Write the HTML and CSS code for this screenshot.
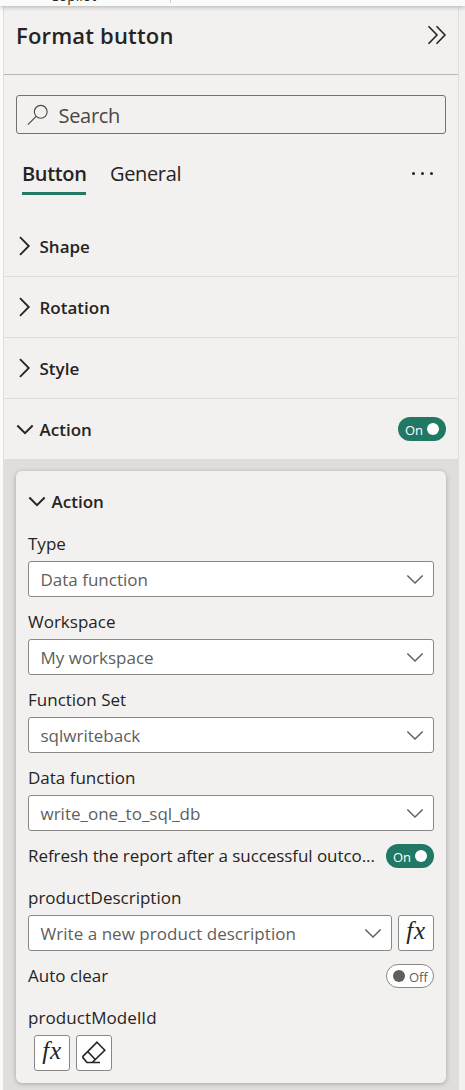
FILE: index.html
```html
<!DOCTYPE html>
<html lang="en">
<head>
<meta charset="utf-8">
<title>Format button</title>
<link rel="stylesheet" href="styles.css">
</head>
<body>
<svg class="defs" width="0" height="0" aria-hidden="true">
  <symbol id="chev-right" viewBox="0 0 12 20"><path d="M1 1.2 9.8 10 1 18.8"/></symbol>
  <symbol id="chev-down" viewBox="0 0 20 12"><path d="M1.5 1.5 10 10 18.500 1.500"/></symbol>
</svg>
<div class="ribbon"><span class="ribbon-label">Copilot</span><span class="ribbon-divider"></span></div>
<main class="pane">
  <header class="pane-header">
    <h1 class="pane-title">Format button</h1>
    <svg class="collapse" viewBox="0 0 20 20"><path d="M1.500 1.200 10 10 1.500 18.800M9.500 1.200 18 10 9.500 18.800"/></svg>
  </header>
  <div class="search">
    <svg class="search-icon" viewBox="0 0 24 24"><circle cx="15" cy="8.500" r="7"/><path d="M10 13.500 1 22.500"/></svg>
    <span class="search-text">Search</span>
  </div>
  <nav class="tabs">
    <span class="tab tab-active">Button</span>
    <span class="tab">General</span>
    <span class="more"><i></i><i></i><i></i></span>
  </nav>
  <section class="row"><svg class="chev-r"><use href="#chev-right"/></svg><span>Shape</span></section>
  <section class="row"><svg class="chev-r"><use href="#chev-right"/></svg><span>Rotation</span></section>
  <section class="row"><svg class="chev-r"><use href="#chev-right"/></svg><span>Style</span></section>
  <section class="row row-open"><svg class="chev-d"><use href="#chev-down"/></svg><span>Action</span>
    <span class="toggle toggle-on"><span>On</span><i></i></span></section>
  <div class="well">
    <div class="card">
      <div class="card-title"><svg class="chev-d"><use href="#chev-down"/></svg><span>Action</span></div>
      <div class="field"><div class="label"><span>Type</span></div>
        <div class="select"><span>Data function</span><svg class="caret"><use href="#chev-down"/></svg></div></div>
      <div class="field"><div class="label"><span>Workspace</span></div>
        <div class="select"><span>My workspace</span><svg class="caret"><use href="#chev-down"/></svg></div></div>
      <div class="field"><div class="label"><span>Function Set</span></div>
        <div class="select"><span>sqlwriteback</span><svg class="caret"><use href="#chev-down"/></svg></div></div>
      <div class="field"><div class="label"><span>Data function</span></div>
        <div class="select"><span>write_one_to_sql_db</span><svg class="caret"><use href="#chev-down"/></svg></div></div>
      <div class="field label"><span class="label-long">Refresh the report after a successful outco...</span>
        <span class="toggle toggle-on"><span>On</span><i></i></span></div>
      <div class="field"><div class="label"><span>productDescription</span></div>
        <div class="controls">
          <div class="select"><span class="value-long">Write a new product description</span><svg class="caret"><use href="#chev-down"/></svg></div>
          <div class="square fx">fx</div>
        </div></div>
      <div class="field label"><span>Auto clear</span>
        <span class="toggle toggle-off"><i></i><span>Off</span></span></div>
      <div class="field"><div class="label"><span class="label-model">productModelId</span></div>
        <div class="controls controls-indent">
          <div class="square fx">fx</div>
          <div class="square"><svg class="eraser" viewBox="0 0 24 24"><path d="M15 1.200 22.800 9.200 10.200 21.500H5L.9 16.600V15.400ZM5.900 10.700 13.300 18.500M10 21.500H18"/></svg></div>
        </div></div>
    </div>
  </div>
</main>
</body>
</html>
```
FILE: styles.css
```css
* { box-sizing: border-box; }
body {
  margin: 0;
  height: 1090px;
  overflow: hidden;
  display: flex;
  flex-direction: column;
  background: linear-gradient(90deg, #fafafa 3px, #f3f1ef 3px);
  color: #252423;
  font-family: "Open Sans", "Noto Sans", sans-serif;
  font-size: 17px;
}
svg { fill: none; stroke: currentColor; flex: none; }
.defs { position: absolute; }
.ribbon {
  height: 6px;
  flex: none;
  display: flex;
  align-items: flex-end;
  overflow: hidden;
  background: #fafafa;
  box-shadow: 0 1px 5px rgba(0, 0, 0, .28);
  position: relative;
}
.ribbon-label { width: 120px; margin: 0 0 1px 50px; font-size: 14px; line-height: 18px; }
.ribbon-divider { width: 1px; height: 3px; margin-bottom: 3px; background: #d0d0d0; }
.pane {
  width: 456px;
  margin-left: 3px;
  flex: 1;
  display: flex;
  flex-direction: column;
  border: solid #dfdedd;
  border-width: 0 1px;
  background: #f3f1ef;
}
.pane-header {
  height: 69px;
  flex: none;
  display: flex;
  justify-content: space-between;
  padding: 19px 12px 0;
  border-bottom: 1px solid #b8b6b5;
}
.pane-title { margin: 0; font-size: 22px; line-height: 20px; font-weight: 600; letter-spacing: .18px; }
.collapse { width: 20px; height: 20px; margin-right: -1px; stroke-width: 1.6; }
.search {
  height: 39px;
  flex: none;
  margin: 20px 12px 0;
  display: flex;
  align-items: center;
  padding-left: 10px;
  gap: 9.500px;
  border: 1px solid #747270;
  border-radius: 3px;
  font-size: 20px;
  letter-spacing: -.3px;
  color: #494745;
}
.search-text { padding-top: 2px; }
.search-icon { width: 22px; height: 22px; stroke-width: 1.2; }
.tabs { height: 82px; flex: none; display: flex; padding: 20px 24px 0 18px; font-size: 20px; line-height: 40px; letter-spacing: -.35px; }
.tab { height: 41px; }
.tab-active { width: 64px; font-weight: 600; border-bottom: 3px solid #217864; margin-right: 24px; }
.more { display: flex; gap: 6px; margin: 18px 1px 0 auto; }
.more i { width: 3px; height: 3px; border-radius: 50%; background: #252423; }
.row {
  height: 61px;
  flex: none;
  display: flex;
  align-items: center;
  padding: 0 12px;
  border-bottom: 1px solid #dfdedd;
  font-weight: 600;
}
.row-open { height: 60px; border: 0; }
.chev-r { width: 12px; height: 20px; margin: 0 8.500px 0 3px; stroke-width: 1.8; }
.chev-d { width: 18px; height: 11px; margin-right: 5.500px; stroke-width: 2.2; }
.toggle { width: 48px; height: 24px; margin-left: auto; border-radius: 12px; display: flex; align-items: center; font-size: 13px; font-weight: 400; flex: none; }
.toggle i { width: 12px; height: 12px; border-radius: 50%; background: #fff; }
.toggle-on { background: #217864; color: #fff; padding-left: 7px; }
.toggle-on i { margin-left: auto; margin-right: 7px; }
.toggle span { padding-top: 2px; }
.toggle-off { background: #fff; border: 1px solid #8a8886; padding-left: 6px; gap: 4px; color: #605e5c; }
.toggle-off i { background: #605e5c; }
.well { flex: 1; padding: 12px 12px 0; background: #dfdedd; }
.card { height: 612px; padding: 4px 12px 12px; border-radius: 6px; background: #f3f1ef; box-shadow: 0 1px 5px rgba(0, 0, 0, .25); }
.card-title { height: 52px; display: flex; align-items: center; font-weight: 600; }
.field { margin-bottom: 8px; }
.label { height: 34px; display: flex; align-items: center; }
.label > span:first-child { padding-bottom: 2px; }
.label-long { letter-spacing: -.07px; }
.label-model { letter-spacing: .08px; }
.value-long { letter-spacing: .04px; }
.select {
  height: 36px;
  flex: 1;
  display: flex;
  align-items: center;
  justify-content: space-between;
  padding: 0 9px 0 11.500px;
  border: 1px solid #8a8886;
  border-radius: 3px;
  background: #fff;
  color: #605e5c;
}
.label span, .select span, .row > span, .card-title span { white-space: nowrap; }
.caret { width: 18px; height: 11px; stroke-width: 1.6; }
.controls { display: flex; gap: 6px; }
.controls-indent { padding-left: 6px; }
.square { width: 36px; height: 36px; display: flex; align-items: center; justify-content: center; border: 1px solid #8a8886; border-radius: 3px; background: #fff; }
.fx { font: italic 25px/32px "Liberation Serif", serif; letter-spacing: .8px; padding-bottom: 4px; }
.eraser { width: 24px; height: 24px; stroke-width: 1.6; }
```
